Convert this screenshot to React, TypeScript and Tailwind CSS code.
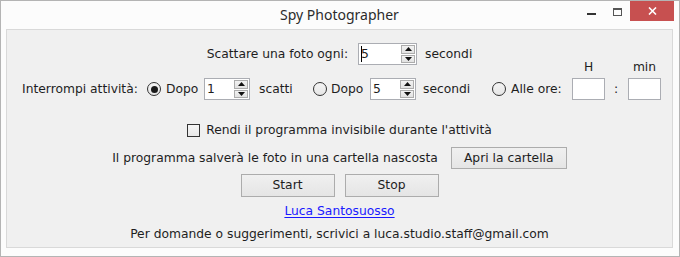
import React from 'react';

const font = { fontFamily: '"DejaVu Sans", Verdana, sans-serif' };

function Spinner({ value, width, caret }: { value: string; width: string; caret?: boolean }) {
  return (
    <div className={`${width} h-[22px] flex items-stretch border border-[#abadb3] bg-white`}>
      <div className="flex-1 flex items-center pl-[2px] text-[12.3px] text-[#1e1e1e] leading-none">
        {caret && <span className="w-px h-[16px] bg-black -mr-px" />}
        {value}
      </div>
      <div className="w-[16px] flex flex-col p-px gap-px">
        <div className="flex-1 flex items-center justify-center border border-[#acacac] bg-gradient-to-b from-[#f2f2f2] to-[#e2e2e2]">
          <svg width="7" height="4" viewBox="0 0 7 4">
            <path d="M0 4 L3.5 0 L7 4 Z" fill="#111" />
          </svg>
        </div>
        <div className="flex-1 flex items-center justify-center border border-[#acacac] bg-gradient-to-b from-[#f2f2f2] to-[#e2e2e2]">
          <svg width="7" height="4" viewBox="0 0 7 4">
            <path d="M0 0 L7 0 L3.5 4 Z" fill="#111" />
          </svg>
        </div>
      </div>
    </div>
  );
}

function Radio({ checked }: { checked?: boolean }) {
  return (
    <span className="w-[14px] h-[14px] rounded-full border border-[#333] bg-gradient-to-b from-[#f4f4f4] to-[#e6e6e6] flex items-center justify-center shrink-0">
      {checked && <span className="w-[7px] h-[7px] rounded-full bg-[#1a1a1a]" />}
    </span>
  );
}

function WinButton({ label, width, height }: { label: string; width: string; height: string }) {
  return (
    <button
      className={`${width} ${height} border border-[#acacac] bg-gradient-to-b from-[#f0f0f0] to-[#e5e5e5] text-[12.3px] text-[#1e1e1e] leading-none flex items-center justify-center`}
    >
      {label}
    </button>
  );
}

function TimeBox({ label }: { label: string }) {
  return (
    <div className="flex flex-col items-center gap-[7px]">
      <span className="text-[12.3px] leading-[8px] text-[#1e1e1e]">{label}</span>
      <div className="w-[33px] h-[22px] border border-[#abadb3] bg-white" />
    </div>
  );
}

export default function App() {
  return (
    <div style={font} className="w-[680px] h-[257px] flex flex-col border border-[#b4b4b4] bg-[#fcfcfc] pl-[5px] pr-[6px] pb-[8px] text-[#1e1e1e]">
      {/* Title bar */}
      <div className="h-[28px] grid grid-cols-[1fr_auto_1fr] items-start">
        <div />
        <div
          className="pt-[5px] text-[14px] leading-[18px] text-[#2b2b2b]"
          style={{ fontFamily: '"Noto Sans", "Open Sans", sans-serif' }}
        >
          Spy Photographer
        </div>
        <div className="flex justify-end items-start">
          <div className="w-[9px] h-[2px] bg-[#333] mt-[12px] mr-[17px]" />
          <div className="w-[9px] h-[8px] border border-t-2 border-[#555] mt-[7px] mr-[8px]" />
          <div className="w-[44px] h-[20px] bg-[#c75050] flex items-center justify-center -mr-px">
            <svg width="9" height="8" viewBox="0 0 9 8">
              <path d="M1 0.5 L8 7.5 M8 0.5 L1 7.5" stroke="#fff" strokeWidth="1.6" />
            </svg>
          </div>
        </div>
      </div>

      {/* Client area */}
      <div className="flex-1 flex flex-col border border-[#d9d9d9] bg-[#f0f0f0] text-[12.3px] leading-none">
        {/* Row 1 */}
        <div className="mt-[13px] h-[22px] flex items-center justify-center">
          <span>Scattare una foto ogni:</span>
          <div className="ml-[10px]">
            <Spinner value="5" width="w-[59px]" caret />
          </div>
          <span className="ml-[8px]">secondi</span>
        </div>

        {/* Row 2 */}
        <div className="-mt-[2px] pl-[15px] flex items-end">
          <div className="h-[22px] w-[125px] flex items-center">Interrompi attività:</div>
          <div className="h-[22px] flex items-center">
            <Radio checked />
          </div>
          <div className="h-[22px] w-[38px] ml-[5px] flex items-center">Dopo</div>
          <Spinner value="1" width="w-[46px]" />
          <div className="h-[22px] w-[54px] ml-[9px] flex items-center">scatti</div>
          <div className="h-[22px] flex items-center">
            <Radio />
          </div>
          <div className="h-[22px] w-[39px] ml-[4px] flex items-center">Dopo</div>
          <Spinner value="5" width="w-[46px]" />
          <div className="h-[22px] w-[69px] ml-[7px] flex items-center">secondi</div>
          <div className="h-[22px] flex items-center">
            <Radio />
          </div>
          <div className="h-[22px] w-[61px] ml-[5px] flex items-center">Alle ore:</div>
          <TimeBox label="H" />
          <div className="h-[22px] w-[23px] pl-[9px] flex items-center">:</div>
          <TimeBox label="min" />
        </div>

        {/* Row 3 */}
        <div className="mt-[22px] h-[16px] flex items-center justify-center">
          <span className="w-[13px] h-[13px] border border-[#333] bg-gradient-to-b from-[#f6f6f6] to-[#e8e8e8]" />
          <span className="ml-[6px]">Rendi il programma invisibile durante l'attività</span>
        </div>

        {/* Row 4 */}
        <div className="mt-[9px] flex items-center justify-center">
          <span>Il programma salverà le foto in una cartella nascosta</span>
          <div className="ml-[13px]">
            <WinButton label="Apri la cartella" width="w-[116px]" height="h-[22px]" />
          </div>
        </div>

        {/* Row 5 */}
        <div className="mt-[5px] flex items-center justify-center gap-[10px]">
          <WinButton label="Start" width="w-[94px]" height="h-[23px]" />
          <WinButton label="Stop" width="w-[94px]" height="h-[23px]" />
        </div>

        {/* Link */}
        <div className="mt-[6px] h-[16px] flex items-center justify-center">
          <a href="#" className="text-[#1a1aff] underline underline-offset-2">
            Luca Santosuosso
          </a>
        </div>

        {/* Footer */}
        <div className="mt-[7px] h-[16px] flex items-center justify-center">
          Per domande o suggerimenti, scrivici a luca.studio.staff@gmail.com
        </div>
      </div>
    </div>
  );
}
